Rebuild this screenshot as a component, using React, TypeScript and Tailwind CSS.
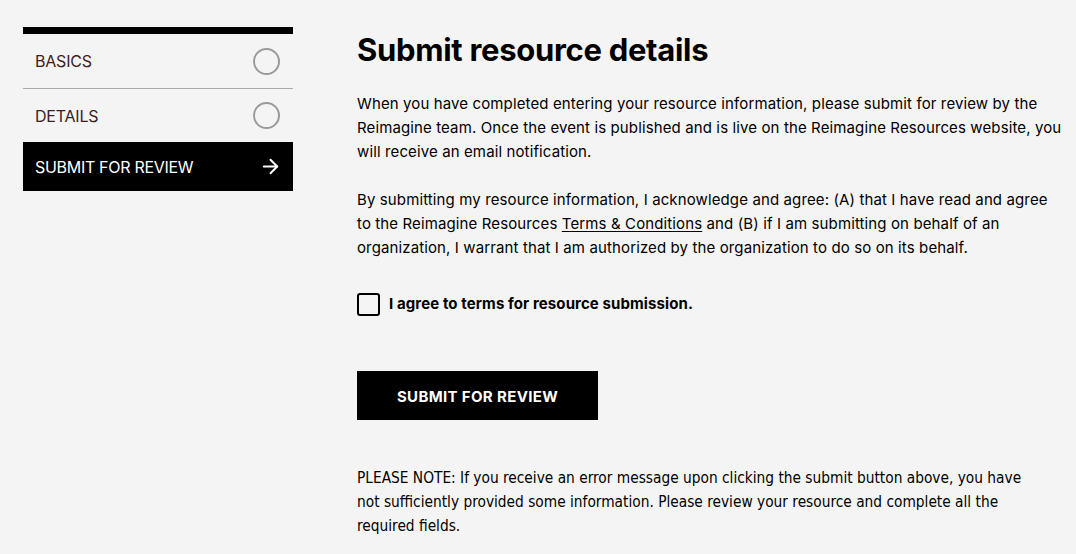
import React, { useState } from 'react';
import { ArrowRight } from 'lucide-react';

const steps = [
  { label: 'BASICS', active: false },
  { label: 'DETAILS', active: false },
  { label: 'SUBMIT FOR REVIEW', active: true },
];

export default function App() {
  const [agreed, setAgreed] = useState(false);

  return (
    <div className="min-h-[554px] w-full bg-[#f4f4f4] text-black font-['Inter',sans-serif]">
      <div className="flex pl-[23px] pt-[27px]">
        {/* step nav */}
        <nav className="w-[270px] shrink-0 border-t-[7px] border-black">
          {steps.map((s, i) =>
            s.active ? (
              <div key={s.label} className="h-[49px] bg-black flex items-center justify-between pl-3 pr-[11px] text-white text-[16px] tracking-[-0.3px]">
                <span>{s.label}</span>
                <ArrowRight size={23} strokeWidth={2} />
              </div>
            ) : (
              <div
                key={s.label}
                className={`flex items-center justify-between pl-3 pr-[13px] text-[16px] text-[#3d1d22] tracking-[-0.2px] ${i === 0 ? 'h-[55px] border-b border-[#a9a9a9]' : 'h-[53px]'}`}
              >
                <span>{s.label}</span>
                <span className="w-[27px] h-[27px] rounded-full border-2 border-[#9a9a9a]" />
              </div>
            )
          )}
        </nav>

        {/* main */}
        <main className="ml-[64px] w-[706px] pt-[4px]">
          <h1 className="text-[31px] leading-[38px] font-bold tracking-[-0.3px]">Submit resource details</h1>

          <p className="mt-[23px] text-[15px] leading-[24px] tracking-[0.12px]">
            When you have completed entering your resource information, please submit for review by the Reimagine team. Once the event is published and is live on the Reimagine Resources website, you will receive an email notification.
          </p>

          <p className="mt-[24px] text-[15px] leading-[24px] tracking-[0.12px]">
            By submitting my resource information, I acknowledge and agree: (A) that I have read and agree to the Reimagine Resources{' '}
            <a href="#" className="underline underline-offset-2">Terms &amp; Conditions</a> and (B) if I am submitting on behalf of an organization, I warrant that I am authorized by the organization to do so on its behalf.
          </p>

          <label className="mt-[33px] flex items-center gap-[9px] cursor-pointer">
            <input
              type="checkbox"
              checked={agreed}
              onChange={e => setAgreed(e.target.checked)}
              className="appearance-none w-[23px] h-[23px] border-2 border-black rounded-[3px] bg-transparent checked:bg-black"
            />
            <span className="text-[15px] font-bold tracking-[0.1px]">I agree to terms for resource submission.</span>
          </label>

          <button className="mt-[55px] w-[241px] h-[49px] pt-[3px] bg-black text-white text-[15px] font-bold tracking-[0.35px]">
            SUBMIT FOR REVIEW
          </button>

          <p className="mt-[46px] w-[690px] text-[15.3px] leading-[24px] font-['Liberation_Sans_Narrow','DejaVu_Sans_Condensed',sans-serif]">
            PLEASE NOTE: If you receive an error message upon clicking the submit button above, you have not sufficiently provided some information. Please review your resource and complete all the required fields.
          </p>
        </main>
      </div>
    </div>
  );
}
